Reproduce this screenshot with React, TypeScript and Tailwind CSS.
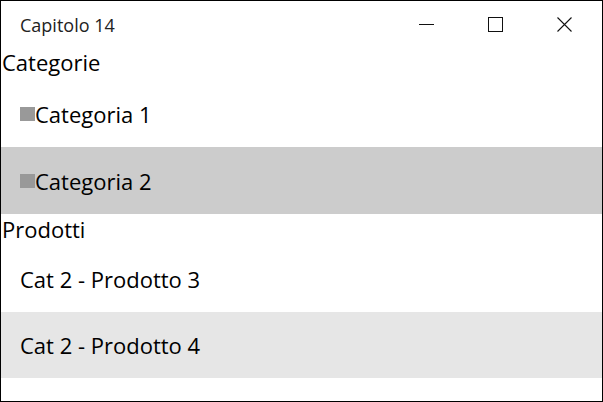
const categorie = [
  { id: 1, nome: "Categoria 1", selected: false },
  { id: 2, nome: "Categoria 2", selected: true },
];

const prodotti = [
  { id: 3, nome: "Cat 2 - Prodotto 3", hover: false },
  { id: 4, nome: "Cat 2 - Prodotto 4", hover: true },
];

const App = () => {
  return (
    <div
      className="w-[603px] h-[402px] border border-black bg-white flex flex-col overflow-hidden text-black"
      style={{ fontFamily: "'Open Sans', 'Noto Sans', sans-serif" }}
    >
      {/* title bar */}
      <div className="h-[46px] flex items-center shrink-0">
        <div className="pl-[19px] pt-[3px] text-[18px] text-[#222] flex-1">Capitolo 14</div>
        <div className="flex h-full pr-[3px]">
          <div className="w-[69px] h-full flex items-center justify-center">
            <svg width="15" height="15" viewBox="0 0 15 15">
              <line x1="0" y1="7.5" x2="15" y2="7.5" stroke="#111" strokeWidth="1" />
            </svg>
          </div>
          <div className="w-[69px] h-full flex items-center justify-center">
            <svg width="15" height="15" viewBox="0 0 15 15">
              <rect x="0.5" y="0.5" width="14" height="14" fill="none" stroke="#111" strokeWidth="1" />
            </svg>
          </div>
          <div className="w-[69px] h-full flex items-center justify-center">
            <svg width="15" height="15" viewBox="0 0 15 15">
              <path d="M0.5 0.5 L14.5 14.5 M14.5 0.5 L0.5 14.5" stroke="#111" strokeWidth="1.1" />
            </svg>
          </div>
        </div>
      </div>

      <div className="h-[33px] pl-[1px] text-[22px] leading-[30px] shrink-0">Categorie</div>
      {categorie.map((c) => (
        <div
          key={c.id}
          className={`h-[67px] shrink-0 flex items-center pl-[19px] text-[22px] leading-[30px] ${c.selected ? "bg-[#cccccc]" : ""}`}
        >
          <div className="w-[15px] h-[14px] bg-[#999999]" />
          <span>{c.nome}</span>
        </div>
      ))}

      <div className="h-[32px] pl-[1px] text-[22px] leading-[30px] shrink-0">Prodotti</div>
      {prodotti.map((p) => (
        <div
          key={p.id}
          className={`h-[66px] shrink-0 flex items-center pl-[19px] text-[22px] leading-[30px] ${p.hover ? "bg-[#e6e6e6]" : ""}`}
        >
          {p.nome}
        </div>
      ))}
    </div>
  );
};

export default App;
